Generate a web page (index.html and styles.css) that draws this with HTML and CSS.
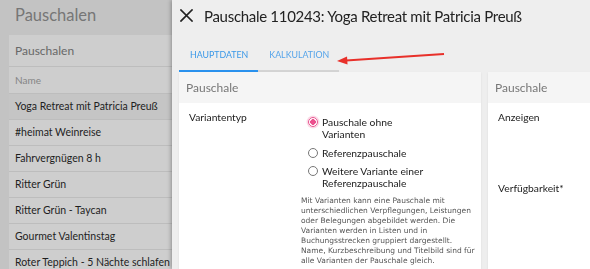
FILE: index.html
```html
<!DOCTYPE html>
<html lang="de">
<head>
    <meta charset="UTF-8">
    <title>Pauschale 110243</title>
    <link rel="stylesheet" href="styles.css">
</head>
<body>
<div class="page">
    <h1 class="page-title">Pauschalen</h1>
    <div class="list-card">
        <div class="list-head">Pauschalen</div>
        <div class="list-col">Name</div>
        <ul class="list">
            <li class="selected">Yoga Retreat mit Patricia Preuß</li>
            <li>#heimat Weinreise</li>
            <li>Fahrvergnügen 8 h</li>
            <li>Ritter Grün</li>
            <li>Ritter Grün - Taycan</li>
            <li>Gourmet Valentinstag</li>
            <li>Roter Teppich - 5 Nächte schlafen - nur 4 bezahlen</li>
        </ul>
    </div>
</div>

<div class="drawer">
    <div class="drawer-head">
        <svg class="close" width="13" height="13" viewBox="0 0 13 13">
            <path d="M1 1L12 12M12 1L1 12" stroke="#222" stroke-width="1.7" stroke-linecap="square"/>
        </svg>
        <h2 class="drawer-title">Pauschale 110243: Yoga Retreat mit Patricia Preuß</h2>
    </div>
    <div class="tabs">
        <span class="tab current">HAUPTDATEN</span>
        <span class="tab">KALKULATION</span>
    </div>
    <div class="panels">
        <section class="card card-main">
            <div class="card-head">Pauschale</div>
            <div class="card-body">
                <div class="row">
                    <div class="label">Variantentyp</div>
                    <div class="field">
                        <div class="radios">
                            <div class="radio checked"><span class="dot"></span><span class="text">Pauschale ohne Varianten</span></div>
                            <div class="radio"><span class="dot"></span><span class="text">Referenzpauschale</span></div>
                            <div class="radio"><span class="dot"></span><span class="text">Weitere Variante einer Referenzpauschale</span></div>
                        </div>
                        <p class="help">Mit Varianten kann eine Pauschale mit<br>unterschiedlichen Verpflegungen, Leistungen<br>oder Belegungen abgebildet werden. Die<br>Varianten werden in Listen und in<br>Buchungsstrecken gruppiert dargestellt.<br>Name, Kurzbeschreibung und Titelbild sind für<br>alle Varianten der Pauschale gleich.</p>
                    </div>
                </div>
            </div>
        </section>
        <section class="card card-side">
            <div class="card-head">Pauschale</div>
            <div class="card-body">
                <div class="label">Anzeigen</div>
                <div class="label label-gap">Verfügbarkeit*</div>
            </div>
        </section>
    </div>
</div>

<svg class="arrow" width="112" height="16" viewBox="0 0 112 16">
    <path d="M108 3L10 9.5" stroke="#e8302a" stroke-width="2"/>
    <path d="M1 10L11 5.5L11.5 13.5Z" fill="#e8302a"/>
</svg>
</body>
</html>
```

FILE: styles.css
```css
*{
    margin: 0;
    padding: 0;
    box-sizing: border-box;
}
body{
    width: 590px;
    height: 269px;
    overflow: hidden;
    font-family: "Lato", "Open Sans", sans-serif;
    color: #222;
    background: #c3c3c3;
}
.page{
    padding-left: 9px;
}
.page-title{
    height: 35px;
    line-height: 30px;
    padding-left: 6px;
    font-size: 16.5px;
    font-weight: normal;
    color: #767676;
}
.list-card{
    width: 420px;
    background: #cecece;
}
.list-head{
    height: 31px;
    line-height: 31px;
    padding-left: 6px;
    font-size: 12px;
    color: #686868;
}
.list-col{
    height: 27px;
    line-height: 26px;
    padding-left: 6px;
    border-top: 1px solid #bdbdbd;
    font-size: 10px;
    color: #858585;
}
.list{
    list-style: none;
}
.list li{
    height: 26px;
    line-height: 25px;
    padding-left: 6px;
    border-top: 1px solid #bdbdbd;
    font-size: 10.5px;
    color: #1e1e1e;
    white-space: nowrap;
}
.list li.selected{
    background: #c5c5c5;
}

/* drawer over the page */
.drawer{
    position: fixed;
    top: 0;
    left: 172px;
    right: 0;
    bottom: 0;
    background: #eeeeee;
    box-shadow: -1px 0 4px rgba(0,0,0,.3);
}
.drawer-head{
    height: 31px;
    display: flex;
    align-items: center;
    padding-left: 8px;
}
.close{
    flex: none;
}
.drawer-title{
    margin-left: 11px;
    font-size: 15px;
    letter-spacing: -.3px;
    font-weight: normal;
    color: #222;
    white-space: nowrap;
}
.tabs{
    display: flex;
    margin: 7px 0 0 7px;
}
.tab{
    height: 34px;
    line-height: 33px;
    padding: 0 10px 0 11px;
    border-bottom: 2px solid #d4d4d4;
    font-size: 8.8px;
    color: #55a4ea;
}
.tab.current{
    color: #3a98e8;
    border-bottom-color: #2a92ee;
}
.panels{
    display: flex;
    gap: 7px;
    padding-left: 7px;
}
.card{
    height: 220px;
    background: #fff;
    box-shadow: 0 1px 2px rgba(0,0,0,.08);
}
.card-main{
    width: 302px;
}
.card-side{
    flex: 1;
}
.card-head{
    height: 31px;
    line-height: 31px;
    padding-left: 7px;
    background: #f5f5f5;
    font-size: 12px;
    color: #777;
}
.card-body{
    padding: 8px 10px;
}
.row{
    display: flex;
}
.label{
    width: 112px;
    flex: none;
    font-size: 10.3px;
    line-height: 13px;
    color: #222;
    white-space: nowrap;
}
.label-gap{
    margin-top: 58px;
}
.radios{
    padding: 5px 0 0 7px;
}
.radio{
    display: flex;
    gap: 4px;
    margin-bottom: 6.5px;
}
.radio .dot{
    flex: none;
    width: 10px;
    height: 10px;
    margin-top: 1px;
    border: 1px solid #777;
    border-radius: 50%;
}
.radio.checked .dot{
    border-color: #e8528e;
    background: radial-gradient(circle, #ec4f8d 0 2.6px, #fff 3px);
    box-shadow: 0 0 0 1.5px rgba(236,80,140,.22);
}
.radio .text{
    max-width: 104px;
    font-size: 10.3px;
    line-height: 12px;
    color: #222;
}
.help{
    margin-top: 3.5px;
    font-family: "DejaVu Sans", sans-serif;
    font-size: 7.5px;
    line-height: 10px;
    color: #555;
    white-space: nowrap;
}
.arrow{
    position: absolute;
    left: 336px;
    top: 51px;
}
```
